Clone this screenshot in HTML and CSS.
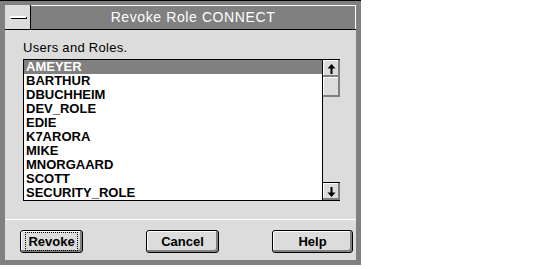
FILE: index.html
```html
<!DOCTYPE html>
<html lang="en">
<head>
    <meta charset="UTF-8">
    <title>Revoke Role CONNECT</title>
    <link rel="stylesheet" href="styles.css">
</head>
<body>
    <div class="window">
        <div class="titlebar">
            <div class="sysmenu"><span class="sysmenu-bar"></span></div>
            <div class="caption">Revoke Role CONNECT</div>
        </div>
        <div class="dialog-body">
            <div class="main">
                <div class="label">Users and Roles.</div>
                <div class="listbox">
                    <ul class="list">
                        <li class="selected">AMEYER</li>
                        <li>BARTHUR</li>
                        <li>DBUCHHEIM</li>
                        <li>DEV_ROLE</li>
                        <li>EDIE</li>
                        <li>K7ARORA</li>
                        <li>MIKE</li>
                        <li>MNORGAARD</li>
                        <li>SCOTT</li>
                        <li>SECURITY_ROLE</li>
                    </ul>
                    <div class="scrollbar">
                        <div class="sb-btn sb-up">
                            <svg width="9" height="10" viewBox="0 0 9 10"><polygon points="4.5,0 8.5,4.5 5.5,4.5 5.5,10 3.5,10 3.5,4.5 0.5,4.5" fill="#000"/></svg>
                        </div>
                        <div class="sb-thumb"></div>
                        <div class="sb-track"></div>
                        <div class="sb-btn sb-down">
                            <svg width="9" height="10" viewBox="0 0 9 10"><polygon points="4.5,10 8.5,5.5 5.5,5.5 5.5,0 3.5,0 3.5,5.5 0.5,5.5" fill="#000"/></svg>
                        </div>
                    </div>
                </div>
            </div>
            <div class="footer">
                <button class="btn btn-revoke"><span class="focus">Revoke</span></button>
                <button class="btn btn-cancel">Cancel</button>
                <button class="btn btn-help">Help</button>
            </div>
        </div>
    </div>
</body>
</html>
```

FILE: styles.css
```css
body {
    margin: 0;
    background-color: #fff;
    font-family: "Liberation Sans", Arial, sans-serif;
}

.window {
    width: 351px;
    margin-top: 1px;
    background-color: #dcdcdc;
    border: 5px solid #808080;
    border-top-width: 4px;
    box-shadow: 0 -1px 0 #000;
}

.titlebar {
    display: flex;
    height: 24px;
    border-bottom: 1px solid #000;
}

.sysmenu {
    width: 25px;
    border-right: 1px solid #000;
    display: flex;
    align-items: center;
    justify-content: center;
}

.sysmenu-bar {
    width: 16px;
    height: 2px;
    background-color: #fff;
    box-shadow: 1px 1px 0 #000;
}

.caption {
    flex: 1;
    background-color: #808080;
    border-top: 1px solid #fff;
    border-right: 1px solid #fff;
    color: #fff;
    text-align: center;
    font-size: 14px;
    letter-spacing: 0.6px;
    line-height: 23px;
}

.dialog-body {
    height: 230px;
    display: flex;
    flex-direction: column;
}

.main {
    padding: 10px 16px 0 18px;
    margin-bottom: 18px;
}

.label {
    font-size: 13px;
    letter-spacing: 0.3px;
    line-height: 16px;
    margin-bottom: 3px;
    color: #000;
}

.listbox {
    display: flex;
    height: 142px;
}

.list {
    flex: 1;
    margin: 0;
    padding: 0;
    list-style: none;
    background-color: #fff;
    border: 1px solid #000;
}

.list li {
    height: 14px;
    line-height: 14px;
    padding-left: 2px;
    font-size: 13px;
    font-weight: bold;
    color: #000;
}

.list li.selected {
    background-color: #808080;
    color: #fff;
}

.scrollbar {
    width: 17px;
    display: flex;
    flex-direction: column;
}

.sb-btn {
    display: flex;
    align-items: center;
    justify-content: center;
    background-color: #dcdcdc;
    box-shadow: inset -2px -2px 0 #808080, inset 1px 1px 0 #fff;
}

.sb-up {
    height: 17px;
    border-top: 1px solid #000;
}

.sb-thumb {
    height: 20px;
    background-color: #dcdcdc;
    box-shadow: inset -2px -2px 0 #808080, inset 1px 1px 0 #fff;
}

.sb-track {
    flex: 1;
}

.sb-down {
    height: 17px;
    border-top: 1px solid #000;
    border-bottom: 1px solid #000;
}

.footer {
    flex: 1;
    display: flex;
    align-items: flex-start;
    padding: 10px 0 0 15px;
    border-top: 1px solid #fff;
}

.btn {
    height: 23px;
    padding: 0;
    background-color: #dcdcdc;
    border: 1px solid #000;
    border-radius: 3px;
    box-shadow: inset -2px -2px 0 #808080, inset 1px 1px 0 #fff;
    font-family: inherit;
    font-size: 13px;
    font-weight: bold;
    color: #000;
}

.btn-revoke {
    width: 63px;
}

.btn-cancel {
    width: 73px;
    margin-left: 63px;
}

.btn-help {
    width: 81px;
    margin-left: 53px;
}

.focus {
    outline: 1px dotted #000;
    outline-offset: 1px;
    padding: 0 1px;
}
```
